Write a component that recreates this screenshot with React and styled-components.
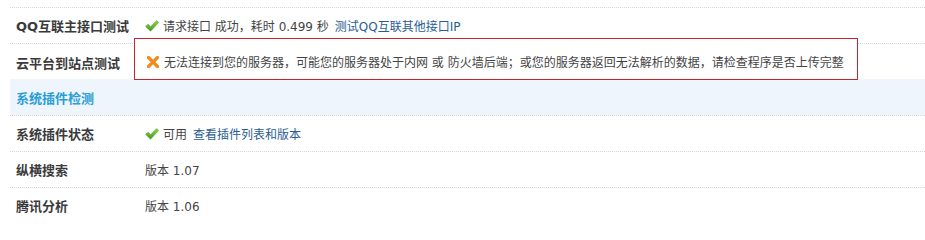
import React from "react";
import styled, { createGlobalStyle } from "styled-components";

const Global = createGlobalStyle`
  html, body { margin: 0; padding: 0; background: #fff; overflow: hidden; }
  body { font-family: "DejaVu Sans", "Noto Sans CJK SC", sans-serif; font-size: 12px; color: #444; }
`;

const Page = styled.div`
  padding: 7px 0 0 10px;
  width: 915px;
`;

const Row = styled.div`
  display: grid;
  grid-template-columns: 125px 1fr;
  height: 36px;
  box-sizing: border-box;
  border-top: 1px dotted #d6d6d6;
  background: ${(p) => (p.$section ? "#eef5fc" : "transparent")};
  ${(p) => (p.$section ? "border-top-color: transparent;" : "")}
`;

const Label = styled.div`
  display: flex;
  align-items: center;
  padding-left: 6px;
  font-family: "DejaVu Sans", "Noto Sans CJK SC", sans-serif;
  font-weight: bold;
  font-size: 13px;
  color: ${(p) => (p.$section ? "#2a9ed6" : "#3a3a3a")};
`;

const Value = styled.div`
  display: flex;
  align-items: center;
  padding-left: 10px;
  gap: 4px;
  white-space: nowrap;
  color: #444;
`;

const ErrorBox = styled.div`
  display: flex;
  align-items: center;
  gap: 5px;
  box-sizing: border-box;
  margin: -6px 0 0 -1px;
  height: 42px;
  width: 724px;
  padding: 5px 0 0 12px;
  border: 1px solid #c4262b;
  background: #fff;
  white-space: nowrap;
  color: #444;
  position: relative;
`;

const Link = styled.a`
  color: #2a5e8f;
  text-decoration: none;
  margin-left: 2px;
`;

const Gap = styled.span`
  display: inline-block;
  width: ${(p) => p.$w || 4}px;
`;

const Check = () => (
  <svg width="14" height="12" viewBox="0 0 14 12">
    <defs>
      <linearGradient id="gck" x1="0" y1="0" x2="0" y2="1">
        <stop offset="0" stopColor="#8fd84a" />
        <stop offset="1" stopColor="#3f9a1c" />
      </linearGradient>
    </defs>
    <path d="M0.6 6.4 L3.2 4.2 L5.6 6.8 L11.6 0.6 L13.6 2.4 L5.6 11.2 Z" fill="url(#gck)" stroke="#5aa52a" strokeWidth="0.6" strokeLinejoin="round" />
  </svg>
);

const Cross = () => (
  <svg width="12" height="12" viewBox="0 0 12 12">
    <path d="M1.5 1.5 L10.5 10.5 M10.5 1.5 L1.5 10.5" stroke="#f28a1e" strokeWidth="3.2" strokeLinecap="round" />
  </svg>
);

export default function App() {
  return (
    <>
      <Global />
      <Page>
        <Row>
          <Label>QQ互联主接口测试</Label>
          <Value>
            <Check />
            <span>请求接口 成功，耗时 0.499 秒</span>
            <Link href="#">测试QQ互联其他接口IP</Link>
          </Value>
        </Row>
        <Row>
          <Label>云平台到站点测试</Label>
          <div>
            <ErrorBox>
              <Cross />
              <span>无法连接到您的服务器，可能您的服务器处于内网 或 防火墙后端；或您的服务器返回无法解析的数据，请检查程序是否上传完整</span>
            </ErrorBox>
          </div>
        </Row>
        <Row $section>
          <Label $section>系统插件检测</Label>
          <Value />
        </Row>
        <Row>
          <Label>系统插件状态</Label>
          <Value>
            <Check />
            <span>可用</span>
            <Link href="#">查看插件列表和版本</Link>
          </Value>
        </Row>
        <Row>
          <Label>纵横搜索</Label>
          <Value>版本 1.07</Value>
        </Row>
        <Row>
          <Label>腾讯分析</Label>
          <Value>版本 1.06</Value>
        </Row>
      </Page>
    </>
  );
}
